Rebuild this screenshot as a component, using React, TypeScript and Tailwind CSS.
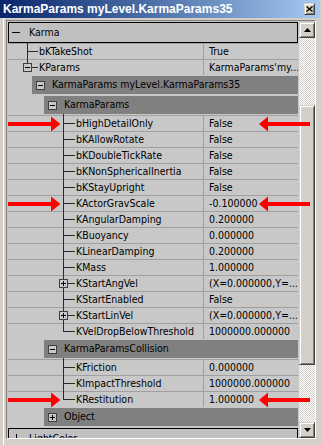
import React from "react";

function BoxIcon({ plus }: { plus?: boolean }) {
  return (
    <span className="relative block h-[9px] w-[9px] shrink-0 border border-[#404040] bg-[#c8c8c8]">
      <span className="absolute left-[1px] top-[3px] h-[1px] w-[5px] bg-black" />
      {plus && <span className="absolute left-[3px] top-[1px] h-[5px] w-[1px] bg-black" />}
    </span>
  );
}

type PropRowProps = {
  label: string;
  value: string;
  group: "a" | "b";
  first?: boolean;
  last?: boolean;
  box?: "plus" | "minus";
};

function PropRow({ label, value, group, first, last, box }: PropRowProps) {
  const A = group === "a";
  const vTop = first && !A ? "-top-[2px]" : "-top-[1px]";
  const vLen = last ? (first && !A ? "h-[10px]" : "h-[9px]") : "bottom-0";
  return (
    <div className="relative flex h-[16px] shrink-0 border-t border-[#a0a0a0]">
      <div
        className={`flex w-[195px] shrink-0 items-center overflow-hidden whitespace-nowrap ${
          A ? "pl-[31px]" : "pl-[68px]"
        }`}
      >
        {label}
      </div>
      <div className="flex min-w-0 flex-1 items-center overflow-hidden whitespace-nowrap border-l border-[#a0a0a0] pl-[5px]">
        {value}
      </div>
      <span className={`absolute w-[1px] bg-[#2a2a2a] ${A ? "left-[19px]" : "left-[55px]"} ${vTop} ${vLen}`} />
      <span
        className={`absolute top-[7px] h-[1px] bg-[#2a2a2a] ${A ? "left-[19px] w-[11px]" : "left-[55px] w-[12px]"}`}
      />
      {box && (
        <span className={`absolute top-[3px] ${A ? "left-[15px]" : "left-[51px]"}`}>
          <BoxIcon plus={box === "plus"} />
        </span>
      )}
    </div>
  );
}

function Header({ label, lvl, plus }: { label: string; lvl: 1 | 2; plus?: boolean }) {
  return (
    <div className={`my-[1px] flex h-[18px] shrink-0 ${lvl === 1 ? "pl-[24px]" : "pl-[36px]"}`}>
      <div className="flex flex-1 items-center overflow-hidden whitespace-nowrap bg-[#808080] pl-[4px]">
        <BoxIcon plus={plus} />
        <span className="ml-[7px]">{label}</span>
      </div>
    </div>
  );
}

function TopRow({ label, plus, className }: { label: string; plus?: boolean; className?: string }) {
  return (
    <div className={`relative flex h-[21px] shrink-0 items-center border border-black bg-[#c0c0c0] ${className ?? ""}`}>
      <span className="relative ml-[3px] block h-[1px] w-[8px] bg-black">
        {plus && <span className="absolute -top-[4px] left-[4px] block h-[9px] w-[1px] bg-black" />}
      </span>
      <span className="ml-[9px]">{label}</span>
    </div>
  );
}

function Arrow({ dir }: { dir: "up" | "down" }) {
  return (
    <svg width="7" height="4" viewBox="0 0 7 4">
      {dir === "up" ? <polygon points="3.5,0 7,4 0,4" fill="#000" /> : <polygon points="0,0 7,0 3.5,4" fill="#000" />}
    </svg>
  );
}

const raised =
  "border-t border-l border-t-[#d4d0c8] border-l-[#d4d0c8] border-b border-r border-b-[#404040] border-r-[#404040] shadow-[inset_1px_1px_0_#ffffff,inset_-1px_-1px_0_#808080] bg-[#d4d0c8]";

export default function App() {
  const karmaRows: Omit<PropRowProps, "group">[] = [
    { label: "bHighDetailOnly", value: "False", first: true },
    { label: "bKAllowRotate", value: "False" },
    { label: "bKDoubleTickRate", value: "False" },
    { label: "bKNonSphericalInertia", value: "False" },
    { label: "bKStayUpright", value: "False" },
    { label: "KActorGravScale", value: "-0.100000" },
    { label: "KAngularDamping", value: "0.200000" },
    { label: "KBuoyancy", value: "0.000000" },
    { label: "KLinearDamping", value: "0.200000" },
    { label: "KMass", value: "1.000000" },
    { label: "KStartAngVel", value: "(X=0.000000,Y=...", box: "plus" },
    { label: "KStartEnabled", value: "False" },
    { label: "KStartLinVel", value: "(X=0.000000,Y=...", box: "plus" },
    { label: "KVelDropBelowThreshold", value: "1000000.000000", last: true },
  ];
  const collRows: Omit<PropRowProps, "group">[] = [
    { label: "KFriction", value: "0.000000", first: true },
    { label: "KImpactThreshold", value: "1000000.000000" },
    { label: "KRestitution", value: "1.000000", last: true },
  ];

  const arrowsY = [124, 204, 400];

  return (
    <div className="relative flex h-[445px] w-[322px] flex-col overflow-hidden bg-[#d4d0c8] font-['DejaVu_Sans_Condensed','DejaVu_Sans',sans-serif] text-[10.5px] font-stretch-condensed text-black">
      {/* Title bar */}
      <div className="flex h-[18px] w-[320px] shrink-0 items-center justify-between bg-linear-to-r from-[#0a246a] to-[#a6caf0] pl-[3px] pr-[5px]">
        <span className="whitespace-nowrap font-['Liberation_Sans',Arial,sans-serif] text-[12px] font-bold font-stretch-normal text-white">
          KarmaParams myLevel.KarmaParams35
        </span>
        <span className={`flex h-[12px] w-[11px] items-center justify-center ${raised}`}>
          <svg width="7" height="6" viewBox="0 0 7 6">
            <path d="M0.5 0.5 L6.5 5.5 M6.5 0.5 L0.5 5.5" stroke="#000" strokeWidth="1.3" />
          </svg>
        </span>
      </div>

      {/* Body */}
      <div className="ml-[3px] flex flex-1 flex-col border-l border-white pl-[2px] pt-[2px]">
        <div className="flex h-[419px] w-[310px] border-l border-t border-l-[#808080] border-t-[#808080] border-r border-b border-r-white border-b-white bg-[#c8c8c8] pl-[1px] pt-[1px]">
          {/* List */}
          <div className="flex h-[416px] w-[290px] shrink-0 flex-col overflow-hidden">
            <TopRow label="Karma" />
            <PropRow group="a" label="bKTakeShot" value="True" first />
            <PropRow group="a" label="KParams" value="KarmaParams'my..." last box="minus" />
            <Header lvl={1} label="KarmaParams myLevel.KarmaParams35" />
            <Header lvl={2} label="KarmaParams" />
            {karmaRows.map((r) => (
              <PropRow key={r.label} group="b" {...r} />
            ))}
            <Header lvl={2} label="KarmaParamsCollision" />
            {collRows.map((r) => (
              <PropRow key={r.label} group="b" {...r} />
            ))}
            <Header lvl={2} label="Object" plus />
            <TopRow label="LightColor" plus className="mt-[1px]" />
          </div>
          <div className="w-[1px] shrink-0" />
          {/* Scrollbar */}
          <div className="flex h-[416px] w-[16px] shrink-0 flex-col">
            <div className={`flex h-[16px] shrink-0 items-center justify-center ${raised}`}>
              <Arrow dir="up" />
            </div>
            <div className="flex flex-1 flex-col bg-[repeating-conic-gradient(#d4d0c8_0%_25%,#ffffff_0%_50%)] bg-[length:2px_2px]">
              <div className="h-[67px] shrink-0" />
              <div className={`h-[260px] shrink-0 ${raised}`} />
            </div>
            <div className={`flex h-[16px] shrink-0 items-center justify-center ${raised}`}>
              <Arrow dir="down" />
            </div>
          </div>
        </div>
      </div>

      {/* Red annotation arrows */}
      <svg className="pointer-events-none absolute left-0 top-0" width="322" height="445" viewBox="0 0 322 445">
        {arrowsY.map((cy) => (
          <g key={cy} fill="#ff0000">
            <polygon
              points={`8,${cy - 2} 51,${cy - 2} 51,${cy - 7.5} 60.5,${cy} 51,${cy + 7.5} 51,${cy + 2} 8,${cy + 2}`}
            />
            <polygon
              points={`310,${cy - 2} 268,${cy - 2} 268,${cy - 7.5} 259,${cy} 268,${cy + 7.5} 268,${cy + 2} 310,${cy + 2}`}
            />
          </g>
        ))}
      </svg>
    </div>
  );
}
